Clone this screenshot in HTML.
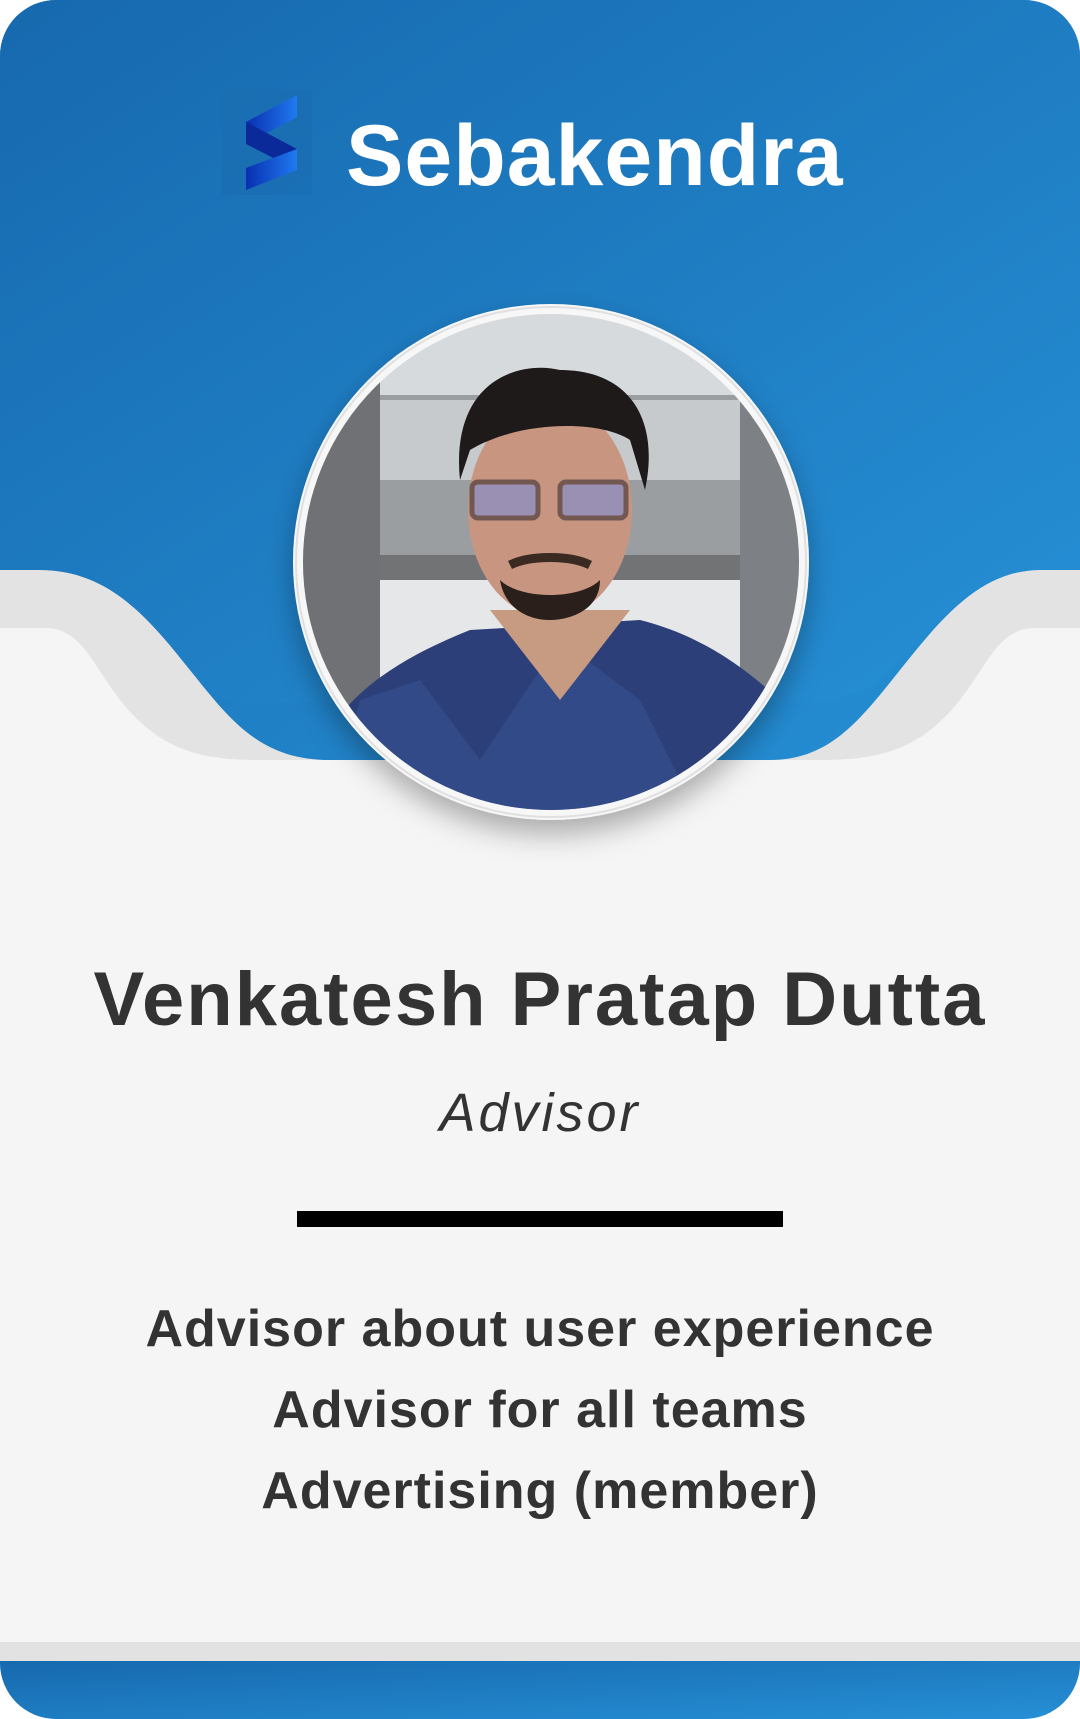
<!DOCTYPE html>
<html><head><meta charset="utf-8"><style>
html,body{margin:0;padding:0;background:#fff;}
body{width:1080px;height:1719px;position:relative;overflow:hidden;font-family:"Liberation Sans",sans-serif;}
.t{position:absolute;left:0;width:1080px;text-align:center;color:#333;white-space:nowrap;}
</style></head><body>
<svg width="1080" height="1719" style="position:absolute;left:0;top:0">
<defs>
<linearGradient id="bg" x1="0" y1="0" x2="1" y2="1"><stop offset="0" stop-color="#1769ae"/><stop offset="1" stop-color="#2690d6"/></linearGradient>
<linearGradient id="lg" x1="0" y1="0" x2="1" y2="0"><stop offset="0" stop-color="#0a2fb0"/><stop offset="1" stop-color="#1f7af0"/></linearGradient>
<clipPath id="card"><rect x="0" y="0" width="1080" height="1719" rx="56"/></clipPath>
<clipPath id="ph"><circle cx="551" cy="562" r="248"/></clipPath>
<filter id="sh" x="-20%" y="-20%" width="140%" height="150%"><feDropShadow dx="0" dy="14" stdDeviation="14" flood-color="#000" flood-opacity="0.3"/></filter>
</defs>
<g clip-path="url(#card)">
<rect width="1080" height="1719" fill="#f5f5f5"/>
<rect width="1080" height="770" fill="url(#bg)"/>
<path d="M0 570 L40 570 C110 570 150 620 190 670 C230 720 260 760 330 760 L770 760 C830 760 860 720 900 670 C940 620 980 570 1040 570 L1080 570 L1080 1719 L0 1719 Z" fill="#e3e3e3"/>
<path d="M0 628 L45 628 C80 628 90 660 120 700 C160 750 200 760 260 760 L0 760 Z" fill="#f5f5f5"/>
<path d="M1080 628 L1035 628 C1000 628 990 660 960 700 C920 750 880 760 820 760 L1080 760 Z" fill="#f5f5f5"/>
<rect x="0" y="760" width="1080" height="900" fill="#f5f5f5"/>
<path d="M0 570 L40 570 C110 570 150 620 190 670 C230 720 260 702 300 702 L780 702 C830 702 860 700 890 670 C940 620 980 570 1040 570 L1080 570 L1080 0 L0 0 Z" fill="url(#bg)"/>
<rect x="0" y="1642" width="1080" height="20" fill="#e2e2e2"/>
<rect x="0" y="1661" width="1080" height="60" fill="url(#bg)"/>
</g>
<rect x="222" y="90" width="90" height="105" fill="#1a6cb0" opacity="0.5"/>
<path d="M297 95 L297 117 L246 144 L246 122 Z" fill="url(#lg)"/>
<path d="M246 122 L297 149 L297 170 L246 144 Z" fill="#0b2a9a"/>
<path d="M297 149 L297 170 L246 190 L246 168 Z" fill="url(#lg)"/>
<g filter="url(#sh)"><circle cx="551" cy="562" r="258" fill="#f7f7f7"/></g>
<circle cx="551" cy="562" r="255" fill="none" stroke="#e0e0e0" stroke-width="2"/>
<g clip-path="url(#ph)">
<rect x="290" y="300" width="520" height="520" fill="#d7dadd"/>
<rect x="290" y="380" width="90" height="440" fill="#6f7174"/>
<rect x="380" y="395" width="360" height="160" fill="#9a9ea1"/>
<rect x="380" y="400" width="360" height="80" fill="#c7cacc"/>
<rect x="380" y="555" width="360" height="40" fill="#717375"/>
<rect x="380" y="580" width="360" height="240" fill="#e6e7e8"/>
<rect x="740" y="400" width="70" height="420" fill="#7d8084"/>
<path d="M300 820 C310 720 370 670 470 630 L640 620 C720 640 770 690 800 720 L810 820 Z" fill="#2c3f78"/>
<path d="M330 820 L360 700 L420 680 L480 760 L560 640 L640 700 L700 820 Z" fill="#34508e" opacity="0.7"/>
<path d="M490 610 L560 700 L630 610 Z" fill="#c79a82"/>
<ellipse cx="550" cy="510" rx="82" ry="108" fill="#c89581"/>
<path d="M460 480 C450 380 520 360 560 370 C630 370 660 420 645 490 L630 440 C600 420 520 420 470 450 Z" fill="#1f1a1a"/>
<path d="M500 580 C520 600 580 600 600 580 C600 610 570 620 550 620 C530 620 505 610 500 580 Z" fill="#2a1f1b"/>
<path d="M510 565 C530 555 570 555 590 565" stroke="#3a2a22" stroke-width="9" fill="none"/>
<rect x="472" y="482" width="66" height="36" rx="6" fill="#7c8ed6" opacity="0.6" stroke="#3a3030" stroke-width="5"/>
<rect x="560" y="482" width="66" height="36" rx="6" fill="#7c8ed6" opacity="0.6" stroke="#3a3030" stroke-width="5"/>
</g>
</svg>
<div class="t" style="top:106px;left:346px;width:auto;color:#fff;font-size:86px;font-weight:bold;letter-spacing:1px;line-height:100px">Sebakendra</div>
<div class="t" style="top:957px;font-size:76px;font-weight:bold;line-height:86px;letter-spacing:2px">Venkatesh Pratap Dutta</div>
<div class="t" style="top:1083px;font-size:54px;font-style:italic;line-height:60px;color:#333;letter-spacing:3px">Advisor</div>
<div style="position:absolute;left:297px;top:1211px;width:486px;height:16px;background:#000"></div>
<div class="t" style="top:1299px;font-size:52px;font-weight:bold;line-height:60px;color:#333;letter-spacing:1px">Advisor about user experience</div>
<div class="t" style="top:1380px;font-size:52px;font-weight:bold;line-height:60px;color:#333;letter-spacing:1px">Advisor for all teams</div>
<div class="t" style="top:1461px;font-size:52px;font-weight:bold;line-height:60px;color:#333;letter-spacing:1px">Advertising (member)</div>
</body></html>
